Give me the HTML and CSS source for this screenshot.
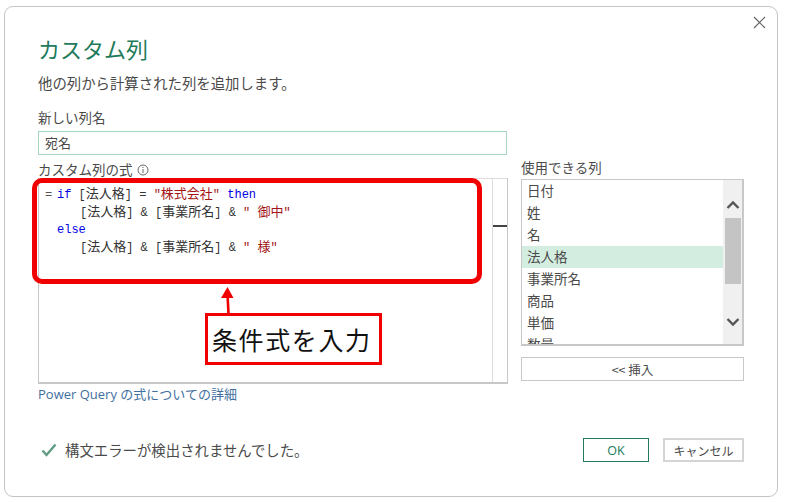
FILE: index.html
```html
<!DOCTYPE html>
<html lang="ja">
<head>
<meta charset="utf-8">
<title>カスタム列</title>
<link rel="stylesheet" href="styles.css">
</head>
<body>
<div class="dialog">
  <button class="close" aria-label="閉じる">
    <svg width="13" height="13" viewBox="0 0 13 13"><path d="M1 1L12 12M12 1L1 12" stroke="#666" stroke-width="1.2" fill="none"/></svg>
  </button>
  <h1 class="title">カスタム列</h1>
  <p class="desc">他の列から計算された列を追加します。</p>
  <div class="label name-label">新しい列名</div>
  <div class="name-input">宛名</div>
  <div class="columns">
    <div class="left">
      <div class="label formula-label">カスタム列の式
        <svg class="info" width="12" height="12" viewBox="0 0 12 12"><circle cx="6" cy="6" r="5" stroke="#666" fill="none"/><path d="M6 5V9M6 3V4" stroke="#666" fill="none"/></svg>
      </div>
      <div class="editor">
        <div class="code">
          <div class="line"><span class="eq">=</span><span class="kw">if</span> [<span class="cjk">法人格</span>] = <span class="str">"<span class="cjk">株式会社</span>"</span> <span class="kw">then</span></div>
          <div class="line indent2">[<span class="cjk">法人格</span>] &amp; [<span class="cjk">事業所名</span>] &amp; <span class="str">" <span class="cjk">御中</span>"</span></div>
          <div class="line indent1"><span class="kw">else</span></div>
          <div class="line indent2">[<span class="cjk">法人格</span>] &amp; [<span class="cjk">事業所名</span>] &amp; <span class="str">" <span class="cjk">様</span>"</span></div>
        </div>
        <div class="minimap"><div class="mini-mark"></div></div>
      </div>
      <a class="link">Power Query の式についての詳細</a>
    </div>
    <div class="right">
      <div class="label avail-label">使用できる列</div>
      <div class="list">
        <div class="items">
          <div class="item">日付</div>
          <div class="item">姓</div>
          <div class="item">名</div>
          <div class="item selected">法人格</div>
          <div class="item">事業所名</div>
          <div class="item">商品</div>
          <div class="item">単価</div>
          <div class="item">数量</div>
        </div>
        <div class="scrollbar">
          <svg class="chev" width="14" height="10" viewBox="0 0 14 10"><path d="M1.5 8L7 2.5L12.5 8" stroke="#555" stroke-width="2.4" fill="none"/></svg>
          <div class="thumb"></div>
          <svg class="chev" width="14" height="10" viewBox="0 0 14 10"><path d="M1.5 2L7 7.5L12.5 2" stroke="#555" stroke-width="2.4" fill="none"/></svg>
        </div>
      </div>
      <button class="insert">&lt;&lt; 挿入</button>
    </div>
  </div>
  <div class="footer">
    <div class="status">
      <svg width="16" height="14" viewBox="0 0 16 14"><path d="M1.5 7.5L5.5 12L14.5 1.5" stroke="#5f9c82" stroke-width="2.4" fill="none"/></svg>
      <span class="status-text">構文エラーが検出されませんでした。</span>
    </div>
    <button class="btn ok">OK</button>
    <button class="btn cancel">キャンセル</button>
  </div>

  <div class="red-frame"></div>
  <svg class="arrow" width="16" height="28" viewBox="0 0 16 28"><path d="M8.5 0L14.5 11H10L10.8 26H8.2L7.4 11H2Z" fill="#f00000"/></svg>
  <div class="callout">条件式を入力</div>
</div>
</body>
</html>
```
FILE: styles.css
```css
* { box-sizing: border-box; }
html, body { margin: 0; padding: 0; background: #fff; }
body {
  width: 785px;
  height: 502px;
  overflow: hidden;
  font-family: "Noto Sans CJK JP", "Noto Sans", sans-serif;
  color: #4a4a4a;
}
.dialog {
  position: relative;
  width: 774px;
  height: 491px;
  margin: 6px 0 0 4px;
  padding: 0 33px 0 33px;
  border: 1px solid #c4c4c4;
  border-radius: 9px;
  background: #fff;
}
.close {
  position: absolute;
  top: 9px;
  right: 11px;
  width: 13px;
  height: 13px;
  padding: 0;
  border: 0;
  background: none;
  display: block;
}
.close svg { display: block; }
.title {
  margin: 25px 0 0;
  height: 32px;
  font-size: 22px;
  line-height: 32px;
  font-weight: 400;
  color: #217a5b;
}
.desc {
  margin: 9px 0 0;
  font-size: 14.4px;
  line-height: 20px;
  height: 20px;
}
.label {
  font-size: 13.5px;
  line-height: 18px;
  height: 18px;
}
.name-label { margin-top: 15px; }
.name-input {
  width: 469px;
  height: 24px;
  margin-top: 5px;
  padding-left: 6px;
  border: 1px solid #a5d6bd;
  font-size: 13px;
  line-height: 21px;
}
.columns {
  display: flex;
  gap: 13px;
}
.left { width: 471px; }
.formula-label { margin-top: 5px; display: flex; align-items: center; gap: 4px; }
.info { margin-top: 1px; }
.editor {
  display: flex;
  height: 206px;
  border: 1px solid #c8c8c8;
  border-top-color: #dcdcdc;
  border-width: 1px 1px 2px 1px;
}
.code {
  flex: 1;
  padding: 8px 0 0 6px;
  font-size: 12px;
  color: #333;
}
.line {
  height: 17.7px;
  line-height: 17.7px;
  white-space: pre;
  font-family: "Liberation Mono", "Noto Sans CJK JP", monospace;
}
.cjk { font-family: "Noto Sans CJK JP", sans-serif; font-size: 13px; line-height: 0; }
.eq { display: inline-block; width: 12px; color: #555; }
.kw { color: #0000e6; }
.str { color: #a31515; }
.indent1 { padding-left: 12px; }
.indent2 { padding-left: 35px; }
.minimap {
  width: 15px;
  flex: none;
  border-left: 1px solid #dcdcdc;
  padding-top: 46px;
}
.mini-mark { height: 2px; background: #444; }
.link {
  display: block;
  margin-top: 1px;
  font-size: 13px;
  line-height: 18px;
  color: #3f6f9f;
  font-family: "Open Sans", "Noto Sans CJK JP", sans-serif;
}
.right { width: 223px; }
.avail-label { margin-top: 3px; }
.list {
  display: flex;
  height: 167px;
  margin-top: 3px;
  border: 1px solid #c8c8c8;
  border-width: 1px 2px 2px 1px;
  overflow: hidden;
}
.items { flex: 1; min-width: 0; overflow: hidden; }
.item {
  height: 22px;
  padding-left: 5px;
  font-size: 13.5px;
  line-height: 20px;
}
.selected { background: #d3eee0; }
.scrollbar {
  width: 19px;
  background: #f0f0f0;
  padding: 20px 0 0 1px;
  display: flex;
  flex-direction: column;
  align-items: center;
}
.chev { display: block; flex: none; }
.thumb {
  width: 16px;
  height: 66px;
  flex: none;
  margin: 8px 0 33px;
  background: #c4c4c4;
}
.insert, .btn {
  padding: 0;
  background: #fff;
  color: #4a4a4a;
  font-family: inherit;
  font-size: 12px;
}
.insert {
  display: block;
  width: 223px;
  height: 24px;
  margin-top: 11px;
  border: 1px solid #c8c8c8;
  font-size: 12.5px;
}
.footer {
  display: flex;
  align-items: center;
  margin-top: 35px;
  height: 24px;
}
.status {
  display: flex;
  align-items: center;
  gap: 8px;
  flex: 1;
  padding-left: 3px;
  font-size: 14.4px;
}
.status-text { position: relative; top: -1px; }
.btn { height: 24px; }
.ok {
  width: 66px;
  margin-right: 14px;
  border: 1px solid #217a5b;
  color: #217a5b;
  font-family: "Open Sans", sans-serif;
  font-size: 12.5px;
}
.cancel {
  width: 81px;
  border: 2px solid #d4d4d4;
  font-size: 12px;
}
.red-frame {
  position: absolute;
  left: 27px;
  top: 171px;
  width: 450px;
  height: 106px;
  border: 5px solid #f00000;
  border-radius: 10px;
}
.arrow {
  position: absolute;
  left: 214px;
  top: 280px;
}
.callout {
  position: absolute;
  left: 200px;
  top: 306px;
  width: 177px;
  height: 52px;
  padding-left: 4px;
  border: 3px solid #f00000;
  background: #fff;
  color: #111;
  font-size: 25px;
  line-height: 47px;
  letter-spacing: 1.6px;
  white-space: nowrap;
}
```
